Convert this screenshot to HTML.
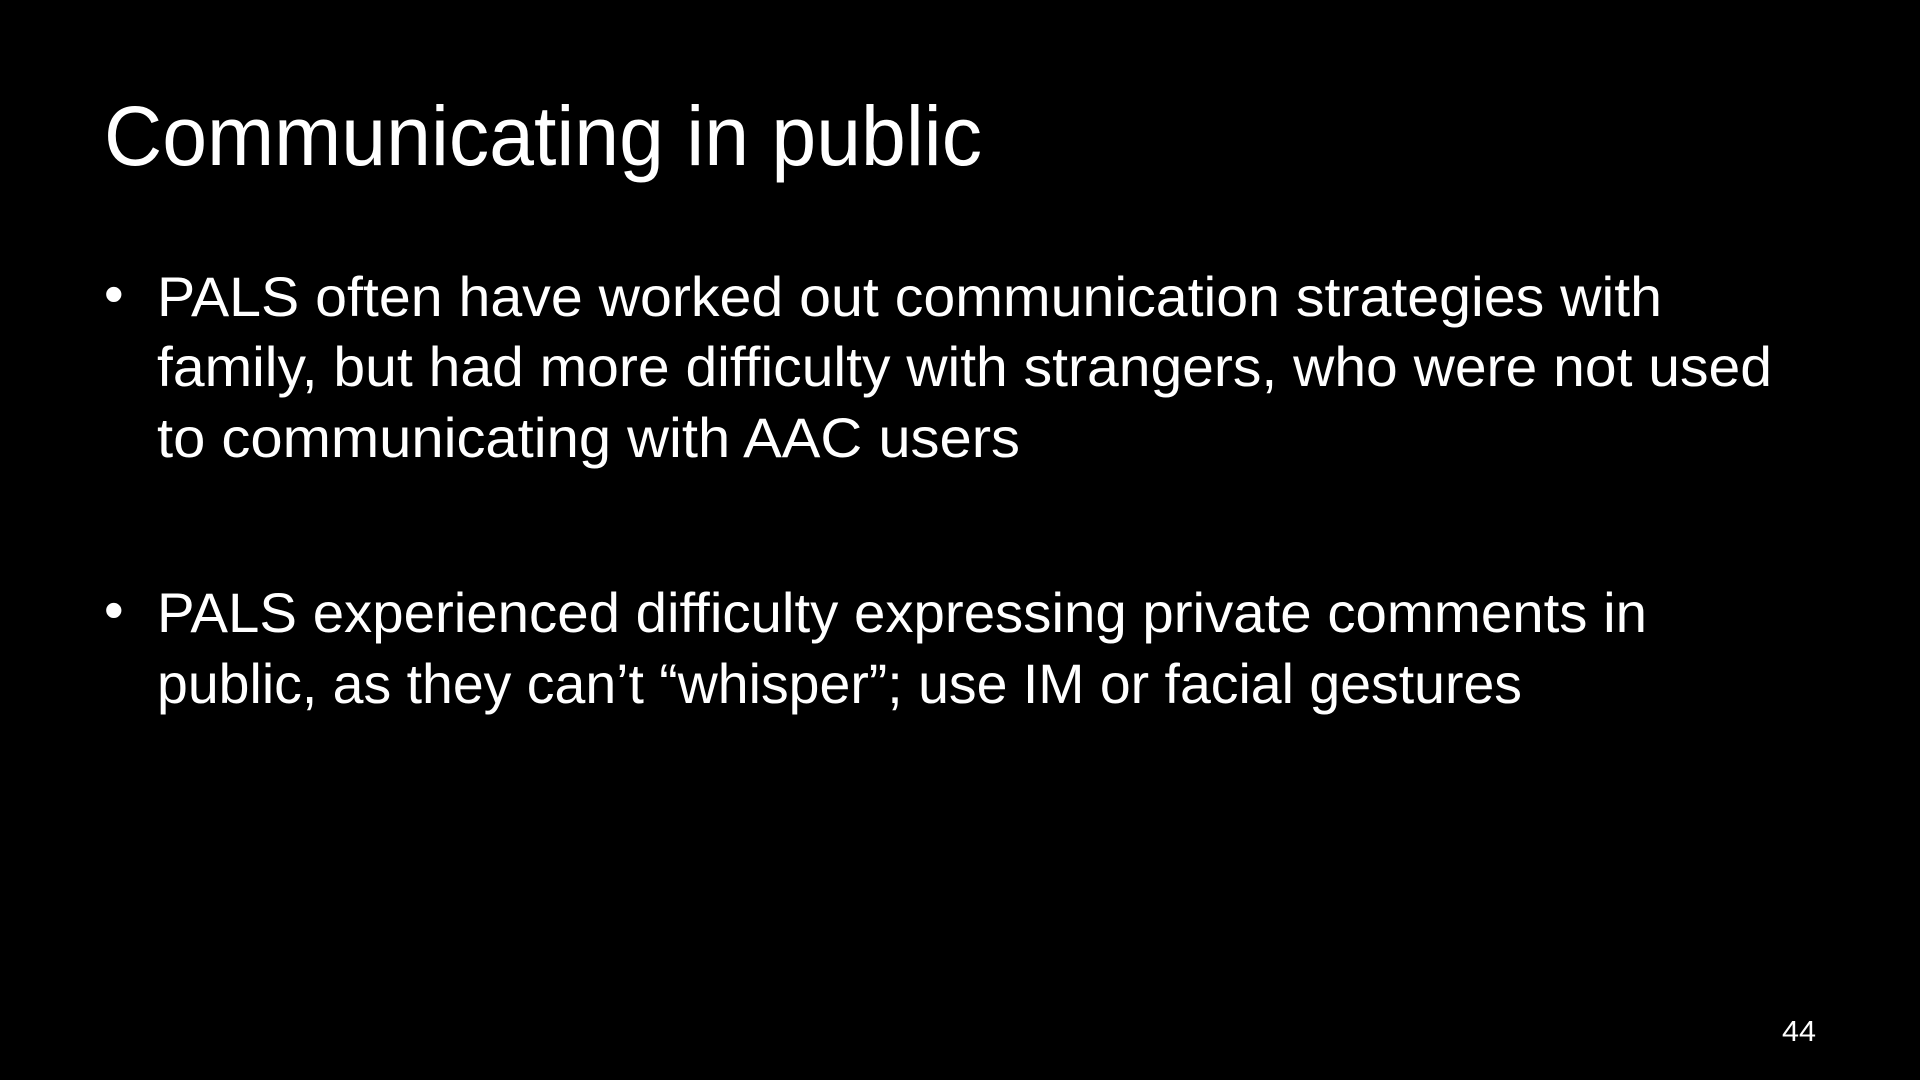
<!DOCTYPE html>
<html><head><meta charset="utf-8"><style>
html,body{margin:0;padding:0;background:#000;width:1920px;height:1080px;overflow:hidden}
svg{display:block}
text{font-family:"Liberation Sans",sans-serif;fill:#fff}
</style></head><body>
<svg width="1920" height="1080" viewBox="0 0 1920 1080">
<rect width="1920" height="1080" fill="#000"/>
<text x="104" y="165" font-size="84" textLength="878" lengthAdjust="spacingAndGlyphs">Communicating in public</text>
<g font-size="56">
<text x="104" y="313">•</text>
<text x="157" y="316" textLength="1505" lengthAdjust="spacingAndGlyphs">PALS often have worked out communication strategies with</text>
<text x="157" y="386" textLength="1615" lengthAdjust="spacingAndGlyphs">family, but had more difficulty with strangers, who were not used</text>
<text x="157" y="457" textLength="863" lengthAdjust="spacingAndGlyphs">to communicating with AAC users</text>
<text x="104" y="629">•</text>
<text x="157" y="632" textLength="1490" lengthAdjust="spacingAndGlyphs">PALS experienced difficulty expressing private comments in</text>
<text x="157" y="703" textLength="1365" lengthAdjust="spacingAndGlyphs">public, as they can’t “whisper”; use IM or facial gestures</text>
</g>
<text x="1782" y="1041" font-size="29" textLength="34" lengthAdjust="spacingAndGlyphs">44</text>
</svg>
</body></html>
